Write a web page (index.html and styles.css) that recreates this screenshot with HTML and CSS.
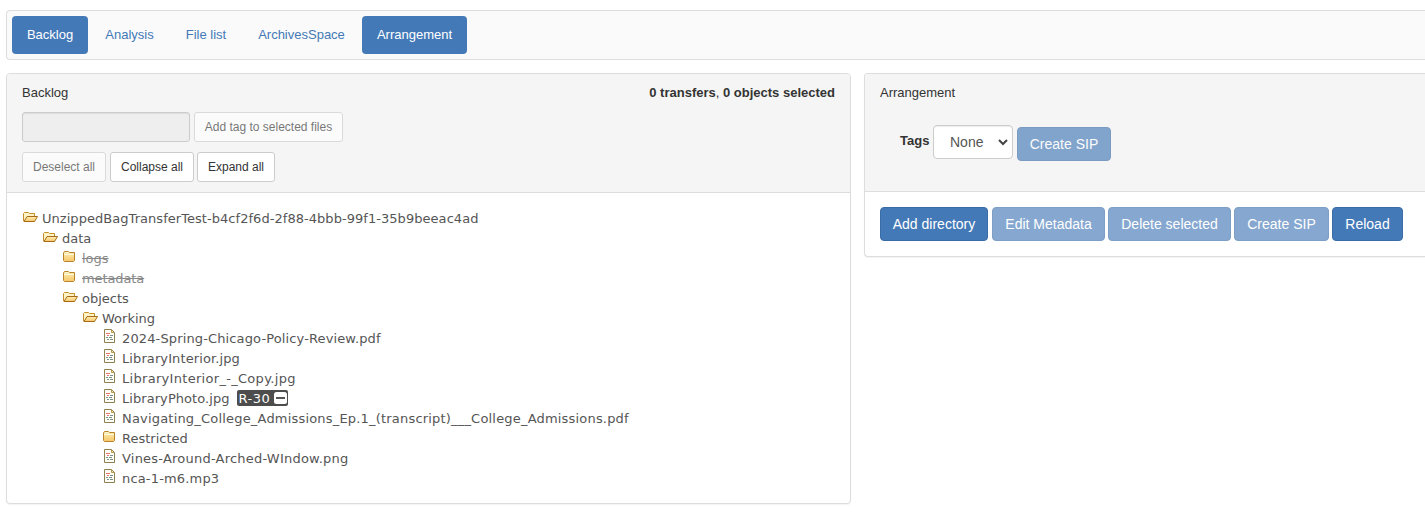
FILE: index.html
```
<!DOCTYPE html>
<html lang="en">
<head>
<meta charset="utf-8">
<title>Backlog</title>
<link rel="stylesheet" href="styles.css">
</head>
<body>
<svg width="0" height="0" class="defs">
  <defs>
    <linearGradient id="gold" x1="0" y1="0" x2="0" y2="1"><stop offset="0" stop-color="#fff0b8"/><stop offset="1" stop-color="#f6c668"/></linearGradient>
    <symbol id="open" viewBox="0 0 16 20">
      <path d="M1.500 13V5.500L2.500 4.500H6.500L7.500 5.500H12.500V8" fill="#fff3c8" stroke="#c58c29"/>
      <path d="M2 13.500L5 8.500H15.500L12.500 13.500Z" fill="url(#gold)" stroke="#a76b16"/>
    </symbol>
    <symbol id="closed" viewBox="0 0 16 20">
      <path d="M1.500 12.500V5L2.500 3.500H6.500L7.500 4.500H12.500V12.500L11.500 13.500H2.500Z" fill="url(#gold)" stroke="#b88329"/>
      <path d="M2 6.500H12M3 4.500H6" fill="none" stroke="#fff8d9"/>
    </symbol>
    <symbol id="file" viewBox="0 0 16 20">
      <path d="M2.500 1.500H9.500L12.500 4.500V14.500H2.500Z" fill="#fffff8" stroke="#8d8154"/>
      <path d="M9.500 2V4.500H12" fill="#f2dfa0" stroke="#b39a45"/>
      <path d="M4 5.500H8M5 7.500H7" stroke="#e8726c"/>
      <path d="M8 7.500H11M4 9.500H6M7 9.500H10M5 11.500H7M8 11.500H11" stroke="#76908a"/>
    </symbol>
  </defs>
</svg>
<nav class="navbar">
  <a class="pill active w-backlog">Backlog</a>
  <a class="pill w-analysis">Analysis</a>
  <a class="pill w-files">File list</a>
  <a class="pill w-space">ArchivesSpace</a>
  <a class="pill active w-arrange">Arrangement</a>
</nav>
<main class="columns">
  <section class="panel backlog">
    <header class="heading">
      <div class="title"><span>Backlog</span><span class="count"><b>0 transfers</b>, <b>0 objects selected</b></span></div>
      <div class="tools"><input class="tag-input" disabled><button class="btn small w-tag" disabled>Add tag to selected files</button></div>
      <div class="tools second"><button class="btn small w-deselect" disabled>Deselect all</button><button class="btn small w-collapse">Collapse all</button><button class="btn small w-expand">Expand all</button></div>
    </header>
    <ul class="tree">
      <li><div class="row"><svg class="icon"><use href="#open"/></svg><span class="t-root">UnzippedBagTransferTest-b4cf2f6d-2f88-4bbb-99f1-35b9beeac4ad</span></div>
        <ul>
          <li><div class="row"><svg class="icon"><use href="#open"/></svg><span>data</span></div>
            <ul>
              <li><div class="row"><svg class="icon"><use href="#closed"/></svg><span class="struck">logs</span></div></li>
              <li><div class="row"><svg class="icon"><use href="#closed"/></svg><span class="struck t-meta">metadata</span></div></li>
              <li><div class="row"><svg class="icon"><use href="#open"/></svg><span>objects</span></div>
                <ul>
                  <li><div class="row"><svg class="icon"><use href="#open"/></svg><span>Working</span></div>
                    <ul>
                      <li><div class="row"><svg class="icon"><use href="#file"/></svg><span class="t-review">2024-Spring-Chicago-Policy-Review.pdf</span></div></li>
                      <li><div class="row"><svg class="icon"><use href="#file"/></svg><span class="t-interior">LibraryInterior.jpg</span></div></li>
                      <li><div class="row"><svg class="icon"><use href="#file"/></svg><span class="t-copy">LibraryInterior_-_Copy.jpg</span></div></li>
                      <li><div class="row"><svg class="icon"><use href="#file"/></svg><span class="t-photo">LibraryPhoto.jpg</span><div class="tag"><span class="tag-text">R-30</span><svg class="minus" viewBox="0 0 13 12"><rect width="13" height="12" rx="2.500" fill="#fff"/><path d="M2 6H11" stroke="#555" stroke-width="2"/></svg></div></div></li>
                      <li><div class="row"><svg class="icon"><use href="#file"/></svg><span class="t-nav">Navigating_College_Admissions_Ep.1_(transcript)___College_Admissions.pdf</span></div></li>
                      <li><div class="row"><svg class="icon"><use href="#closed"/></svg><span>Restricted</span></div></li>
                      <li><div class="row"><svg class="icon"><use href="#file"/></svg><span class="t-vines">Vines-Around-Arched-WIndow.png</span></div></li>
                      <li><div class="row"><svg class="icon"><use href="#file"/></svg><span class="t-nca">nca-1-m6.mp3</span></div></li>
                    </ul>
                  </li>
                </ul>
              </li>
            </ul>
          </li>
        </ul>
      </li>
    </ul>
  </section>
  <section class="panel arrangement">
    <header class="heading">
      <div class="title"><span>Arrangement</span></div>
      <div class="sip-form"><b class="label">Tags</b><div class="select">None<svg width="10" height="7" viewBox="0 0 10 7"><path d="M1 1L5 5L9 1" fill="none" stroke="#444" stroke-width="2"/></svg></div><button class="btn primary w-sip" disabled>Create SIP</button></div>
    </header>
    <div class="actions">
      <button class="btn primary w-add">Add directory</button>
      <button class="btn primary w-edit" disabled>Edit Metadata</button>
      <button class="btn primary w-delete" disabled>Delete selected</button>
      <button class="btn primary w-create" disabled>Create SIP</button>
      <button class="btn primary w-reload">Reload</button>
    </div>
  </section>
</main>
</body>
</html>
```
FILE: styles.css
```
* { box-sizing: border-box; }
body { margin: 0; padding: 10px 0 0 6px; height: 518px; overflow: hidden; background: #fff; color: #333; font: 13px/18px "Liberation Sans", Arial, sans-serif; }
.defs { position: absolute; }
.navbar { display: flex; height: 50px; padding: 5px; border: 1px solid #ddd; border-right: 0; border-radius: 4px 0 0 4px; background: #fafafa; }
.pill { height: 38px; line-height: 38px; border-radius: 4px; text-align: center; color: #4479b7; margin-right: 2px; }
.pill.active { background: #4479b7; color: #fff; }
.w-backlog { width: 76px; } .w-analysis { width: 79px; } .w-files { width: 70px; }
.w-space { width: 117px; } .w-arrange { width: 105px; }
.columns { display: flex; align-items: flex-start; gap: 13px; margin-top: 13px; }
.panel { border: 1px solid #ddd; border-radius: 4px; background: #fff; box-shadow: 0 1px 1px rgba(0,0,0,.05); overflow: hidden; }
.backlog { width: 845px; height: 431px; flex: none; }
.arrangement { flex: 1; height: 184px; border-right: 0; border-radius: 4px 0 0 4px; }
.heading { padding: 10px 15px; background: #f5f5f5; border-bottom: 1px solid #ddd; }
.backlog .heading { height: 119px; }
.arrangement .heading { height: 118px; }
.title { display: flex; justify-content: space-between; }
.tools { display: flex; gap: 4px; margin-top: 10px; }
.tag-input { width: 168px; height: 30px; border: 1px solid #ccc; border-radius: 3px; background: #eee; box-shadow: inset 0 1px 1px rgba(0,0,0,.075); }
.btn { height: 34px; padding: 0; border: 1px solid #ccc; border-radius: 4px; background: #fff; color: #333; font: 14px/20px "Liberation Sans", Arial, sans-serif; white-space: nowrap; }
.btn.small { height: 30px; border-radius: 3px; font-size: 12px; }
.btn.primary { background: #4479b7; border-color: #3a6ca7; color: #fff; }
.btn:disabled { opacity: .65; }
.w-tag { width: 149px; } .w-deselect { width: 84px; } .w-collapse { width: 84px; }
.w-expand { width: 78px; margin-left: -1px; }
.sip-form { display: flex; margin: 23px 0 0 20px; }
.label { width: 33px; line-height: 32px; }
.select { display: flex; align-items: center; justify-content: space-between; width: 80px; height: 34px; padding: 0 4px 0 16px; border: 1px solid #ccc; border-radius: 4px; background: #fff; color: #555; font-size: 14px; box-shadow: inset 0 1px 1px rgba(0,0,0,.075); }
.w-sip { width: 94px; margin: 2px 0 0 4px; }
.actions { display: flex; gap: 4px; padding: 15px; }
.w-add { width: 108px; } .w-edit { width: 113px; } .w-delete { width: 123px; margin-left: -1px; }
.w-create { width: 95px; margin-left: -1px; } .w-reload { width: 71px; margin-left: -1px; }
.tree { padding: 15px; color: #555; font-family: Verdana, "DejaVu Sans", sans-serif; line-height: 20px; }
.tree, .tree ul { list-style: none; margin: 0; }
.tree ul { padding: 0 0 0 20px; }
.row { display: flex; align-items: center; height: 20px; white-space: nowrap; }
.row > span { padding-top: 2px; }
.icon { width: 16px; height: 20px; margin-right: 4px; flex: none; }
.struck { color: #888; text-decoration: line-through; }
.t-root { letter-spacing: .045px; }
.t-meta { letter-spacing: -.1px; }
.t-review { letter-spacing: .13px; }
.t-interior { letter-spacing: .1px; }
.t-copy { letter-spacing: .3px; }
.t-photo { letter-spacing: .06px; }
.t-nav { letter-spacing: .19px; }
.t-vines { letter-spacing: .22px; }
.t-nca { letter-spacing: .17px; }
.tag { display: flex; align-items: center; justify-content: space-between; width: 51px; height: 16px; margin-left: 7px; padding: 0 1px 0 2px; border-radius: 2px; background: #4d4d4d; color: #fff; }
.tag-text { letter-spacing: .5px; padding-top: 1px; }
.minus { width: 13px; height: 12px; }
```
